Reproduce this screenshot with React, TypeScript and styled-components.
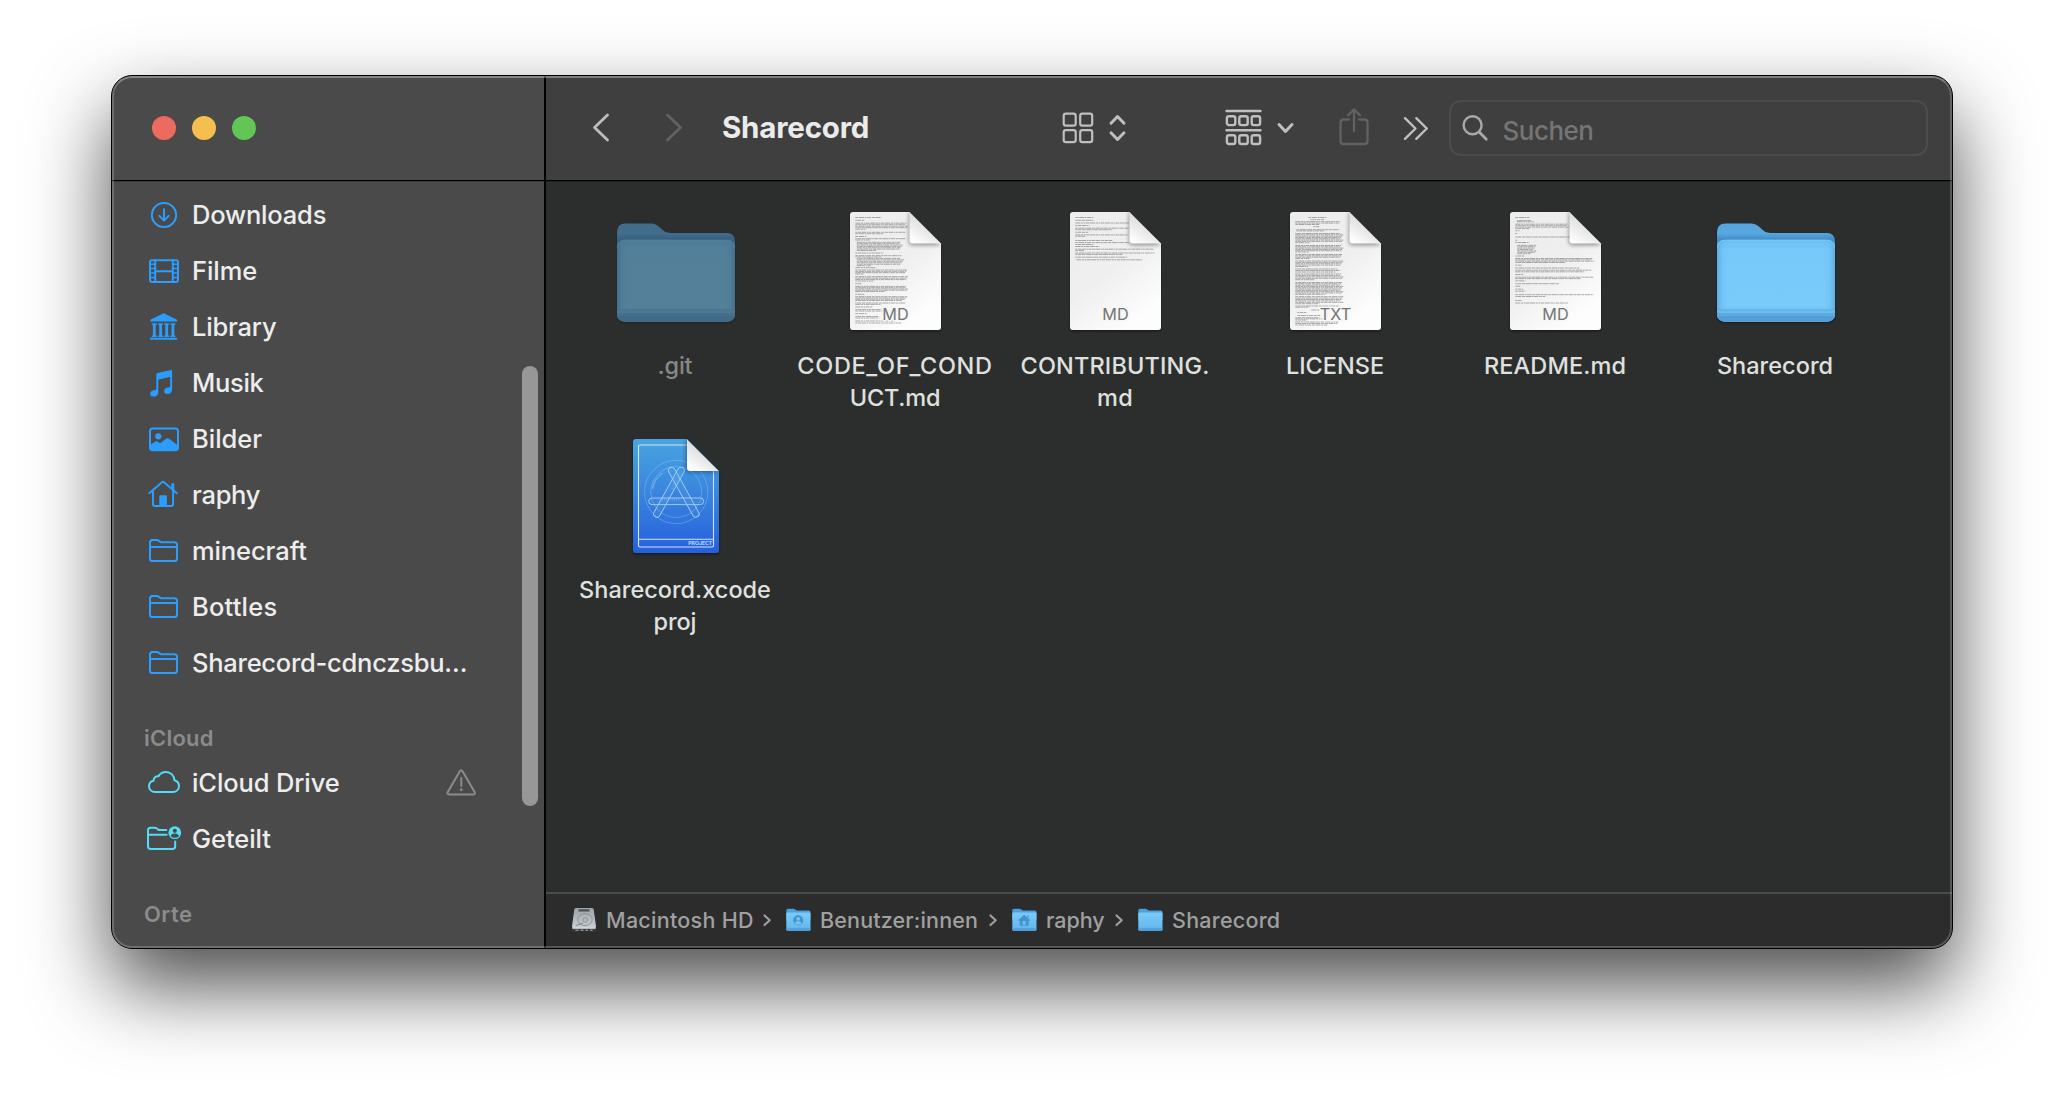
import React from 'react';
import styled, { createGlobalStyle } from 'styled-components';

const Global = createGlobalStyle`
  *, *::before, *::after { box-sizing: border-box; }
  body {
    margin: 0;
    background: #fff;
    font-family: Inter, "Liberation Sans", sans-serif;
    font-weight: 500;
    -webkit-font-smoothing: antialiased;
    overflow: hidden;
  }
`;

const BLUE = '#2a9dff';
const CYAN = '#52dcf7';

/* ---------- Window frame ---------- */

const Desktop = styled.div`
  width: 2064px;
  height: 1096px;
  padding: 75px 111px;
  overflow: hidden;
`;

const Frame = styled.div`
  position: relative;
  display: grid;
  grid-template-columns: 432px 1fr;
  width: 1842px;
  height: 874px;
  border: 1px solid #000;
  border-radius: 21px;
  overflow: hidden;
  background: #2c2e2d;
`;

const WindowShadow = styled.div`
  width: 1842px;
  height: 874px;
  border-radius: 21px;
  box-shadow: 0 37px 80px rgba(0, 0, 0, 0.7);
`;

const FrameHighlight = styled.div`
  position: absolute;
  inset: 0;
  border: 2px solid rgba(255, 255, 255, 0.2);
  border-top-color: rgba(255, 255, 255, 0.33);
  border-radius: 20px;
  pointer-events: none;
`;

/* ---------- Sidebar ---------- */

const Sidebar = styled.aside`
  position: relative;
  display: flex;
  flex-direction: column;
  min-height: 0;
  background: #4a4a4a;
`;

const TrafficLights = styled.div`
  display: flex;
  flex: none;
  gap: 16px;
  height: 105px;
  padding: 40px 0 0 40px;
  border-bottom: 1px solid #000;
`;

const Light = styled.span<{ $color: string }>`
  width: 24px;
  height: 24px;
  border-radius: 50%;
  background: ${(p) => p.$color};
`;

const SidebarBody = styled.nav`
  flex: 1;
  min-height: 0;
  padding-top: 6px;
  overflow: hidden;
  box-shadow: inset 0 1px 0 #3b3b3b;
`;

const SectionTitle = styled.h2<{ $track: number }>`
  height: 64px;
  margin: 0;
  padding: 30px 0 0 32px;
  font-size: 22px;
  line-height: 34px;
  font-weight: 600;
  letter-spacing: ${(p) => p.$track}px;
  color: #8b8b8b;
`;

const SidebarRow = styled.div`
  display: flex;
  align-items: center;
  height: 56px;
  padding: 0 67px 0 36px;
`;

const RowIcon = styled.svg`
  flex: none;
  width: 32px;
  height: 32px;
  overflow: visible;
`;

const RowLabel = styled.span<{ $track: number }>`
  flex: 1;
  padding-left: 12px;
  font-size: 25.5px;
  line-height: 32px;
  letter-spacing: ${(p) => p.$track}px;
  white-space: nowrap;
  color: #ededed;
`;

const ScrollThumb = styled.div`
  position: absolute;
  top: 290px;
  right: 6px;
  width: 16px;
  height: 440px;
  border-radius: 8px;
  background: #979797;
`;

/* ---------- Main column ---------- */

const Main = styled.main`
  display: flex;
  flex-direction: column;
  min-width: 0;
  border-left: 2px solid #000;
`;

const Toolbar = styled.header`
  display: flex;
  flex: none;
  align-items: center;
  height: 105px;
  padding: 0 24px 0 45px;
  border-bottom: 1px solid #000;
  background: #3f3f3f;
`;

const ToolIcon = styled.svg<{ $gap?: number; $lift?: number }>`
  flex: none;
  margin-left: ${(p) => p.$gap ?? 0}px;
  margin-bottom: ${(p) => (p.$lift ?? 0) * 2}px;
  overflow: visible;
`;

const Title = styled.h1`
  width: 340px;
  margin: 0 0 2px 37px;
  font-size: 29.5px;
  font-weight: 700;
  line-height: 40px;
  letter-spacing: -0.2px;
  color: #ebebeb;
`;

const SearchField = styled.div`
  display: flex;
  align-items: center;
  width: 480px;
  height: 56px;
  margin-left: 20px;
  padding-left: 10px;
  border: 2px solid #4c4c4c;
  border-radius: 12px;
`;

const SearchText = styled.span`
  padding: 5px 0 0 14px;
  font-size: 26px;
  line-height: 32px;
  letter-spacing: -0.53px;
  color: #757575;
`;

const Files = styled.section`
  display: grid;
  flex: 1;
  grid-template-columns: repeat(6, 220px);
  grid-auto-rows: 206px;
  row-gap: 18px;
  padding: 27px 0 0 20px;
  box-shadow: inset 0 1px 0 #1f2020;
`;

const FileCell = styled.figure`
  display: flex;
  flex-direction: column;
  align-items: center;
  margin: 0;
`;

const IconBox = styled.div<{ $dim?: boolean; $page?: boolean }>`
  display: flex;
  align-items: center;
  justify-content: center;
  width: 128px;
  height: 128px;
  padding: ${(p) => (p.$page ? '0 1px 2px 0' : '0')};
  opacity: ${(p) => (p.$dim ? 0.53 : 1)};
`;

const FileName = styled.figcaption<{ $dim?: boolean }>`
  display: flex;
  flex-direction: column;
  align-items: center;
  margin-top: 14px;
  padding-right: 2px;
  font-size: 23.5px;
  line-height: 32px;
  white-space: nowrap;
  color: ${(p) => (p.$dim ? '#868887' : '#dfe0df')};
`;

const NameLine = styled.span<{ $track: number }>`
  letter-spacing: ${(p) => p.$track}px;
`;

const Drawing = styled.svg`
  flex: none;
  overflow: visible;
  font-family: Inter, "Liberation Sans", sans-serif;
`;

const PathBar = styled.footer`
  display: flex;
  flex: none;
  align-items: center;
  height: 56px;
  padding: 0 0 2px 25px;
  border-top: 2px solid #4b4b4b;
  background: #2c2c2c;
`;

const Crumb = styled.span<{ $width: number; $track: number }>`
  width: ${(p) => p.$width}px;
  padding-left: 9px;
  font-size: 21.5px;
  line-height: 28px;
  letter-spacing: ${(p) => p.$track}px;
  white-space: nowrap;
  color: #a0a0a0;
`;

/* ---------- Sidebar icons ---------- */

const line = { fill: 'none', strokeWidth: 2, strokeLinecap: 'round', strokeLinejoin: 'round' } as const;

const DownloadIcon = () => (
  <RowIcon viewBox="0 0 32 32" stroke={BLUE} {...line}>
    <circle cx="16" cy="16" r="12.1" />
    <path d="M16 10.3V21.4M11.3 16.9 16 21.6l4.7-4.7" />
  </RowIcon>
);

const FilmIcon = () => (
  <RowIcon viewBox="0 0 32 32" stroke={BLUE} {...line}>
    <rect x="2" y="5.2" width="28" height="21.8" rx="2" />
    <path d="M7.2 5.5v21M24.8 5.5v21M7.2 16.2h17.6" />
    <path d="M2.5 9.3h4M2.5 13.6h4M2.5 18h4M2.5 22.4h4M25.5 9.3h4M25.5 13.6h4M25.5 18h4M25.5 22.4h4" strokeWidth="1.5" />
  </RowIcon>
);

const LibraryIcon = () => (
  <RowIcon viewBox="0 0 32 32" fill={BLUE}>
    <path d="M15.1 2.5q.6-.3 1.2 0L28.6 8.6q.8.5.5 1.4-.2.6-1 .6H3.3q-.8 0-1-.6-.3-.9.5-1.4z" />
    {[6.3, 12.6, 18.7, 24.9].map((x) => (
      <path key={x} d={`M${x - 2.5} 12.3h5v1.5h-1.1v10.6h1.1v1.5h-5v-1.5h1.1V13.8h-1.1z`} />
    ))}
    <rect x="2" y="26.8" width="27.2" height="2" rx=".8" />
  </RowIcon>
);

const MusicIcon = () => (
  <RowIcon viewBox="0 0 32 32" fill={BLUE}>
    <path d="M8.3 7.4q0-1.2 1.2-1.5L23 3q1.1-.2 1.1.9V22.5q0 4.2-4.4 4.500-3.6.1-3.6-2.9 0-2.7 3.5-3.5l1.8-.4q.8-.2.8-1V10.6q0-.6-.6-.5l-10.7 2.3q-.6.1-.6.7V25q0 4.300-4.500 4.600-3.600.1-3.600-2.900 0-2.600 3.400-3.400l1.800-.4q.9-.2.900-1.100z" />
  </RowIcon>
);

const PictureIcon = () => (
  <RowIcon viewBox="0 0 32 32" stroke={BLUE} {...line}>
    <rect x="2" y="5.6" width="28" height="21.7" rx="2.6" />
    <circle cx="10.3" cy="13.3" r="3.1" fill={BLUE} stroke="none" />
    <path d="M2 22l5.600-3.400q1-.6 2 0L12 20.300l6.500-4.700q1.300-.9 2.600.1L30 22.400V25q0 2.300-2.500 2.300h-23Q2 27.300 2 25z" fill={BLUE} stroke="none" />
  </RowIcon>
);

const HomeIcon = () => (
  <RowIcon viewBox="0 0 32 32" stroke={BLUE} {...line}>
    <path d="M1.3 14.2 14 3.2q1-.8 2 0l12.8 11" />
    <path d="M5 12.5V25q0 1.900 1.900 1.900h16.300q1.900 0 1.900-1.900V12.500" />
    <path d="M11.3 27V17.2q0-.9.9-.9h5.8q.9 0 .9.9V27z" fill={BLUE} stroke="none" />
    <path d="M23.2 8.2V5q0-.8.8-.8h1.5q.8 0 .8.8v6z" fill={BLUE} stroke="none" />
  </RowIcon>
);

const FolderLineIcon = () => (
  <RowIcon viewBox="0 0 32 32" stroke={BLUE} {...line}>
    <path d="M2 7.6Q2 5 4.6 5H8.6q1.300 0 2.200.7L12 6.600q.9.700 2.100.7H26.200q2.800 0 2.800 2.800V23.400q0 2.700-2.700 2.700H4.700Q2 26.100 2 23.400z" />
    <path d="M2 11.9h27" />
  </RowIcon>
);

const CloudIcon = () => (
  <RowIcon viewBox="0 0 32 32" stroke={CYAN} {...line}>
    <path d="M7.3 25.1C3.5 25.1 1 22.5 1 19.3c0-2.8 1.8-5 4.5-5.6.1-3 2.4-4.900 5-4.400C11.800 6.800 14.600 5 18 5c4.800 0 8.200 3.500 8.400 8.200 2.900.9 4.600 3.100 4.600 5.800 0 3.500-2.700 6.100-6.300 6.100z" />
  </RowIcon>
);

const SharedFolderIcon = () => (
  <RowIcon viewBox="0 0 32 32" stroke={CYAN} {...line}>
    <path d="M18.3 7.1H12q-1.200 0-2.100-.7L8.800 5.500Q7.900 4.800 6.700 4.800H2.600Q0 4.800 0 7.400V23.200q0 2.800 2.800 2.800H24.400q2.800 0 2.800-2.800V18.600" />
    <path d="M0 11.700h18.600" />
    <circle cx="26.8" cy="9.7" r="6.4" fill={CYAN} stroke="none" />
    <circle cx="26.8" cy="7.8" r="2.1" fill="#4a4a4a" stroke="none" />
    <path d="M22.7 13.3q.6-2.700 4.100-2.700t4.100 2.700q-1.600 1.500-4.100 1.500t-4.100-1.500z" fill="#4a4a4a" stroke="none" />
  </RowIcon>
);

const WarningIcon = () => (
  <RowIcon viewBox="0 0 32 32" stroke="#8b8b8b" {...line}>
    <path d="M14.7 4.5q1.500-2.300 3 0L29.600 25.100q1.100 2.300-1.400 2.400H4.200q-2.500-.1-1.400-2.400z" />
    <path d="M16.3 11v8" />
    <circle cx="16.3" cy="22.7" r="1.4" fill="#8b8b8b" stroke="none" />
  </RowIcon>
);

/* ---------- File icons ---------- */

const FolderArt = () => (
  <Drawing width="118" height="99" viewBox="0 0 118 99">
    <defs>
      <linearGradient id="folderBack" x1="0" y1="0" x2="0" y2="1">
        <stop offset="0" stopColor="#56a5de" />
        <stop offset=".1" stopColor="#58a7df" />
        <stop offset=".17" stopColor="#4189c7" />
      </linearGradient>
      <linearGradient id="folderFront" x1="0" y1="0" x2="0" y2="1">
        <stop offset="0" stopColor="#6dc0f3" />
        <stop offset=".12" stopColor="#77c9fa" />
        <stop offset=".82" stopColor="#79cbfa" />
        <stop offset=".85" stopColor="#70c2f2" />
      </linearGradient>
      <linearGradient id="folderEdge">
        <stop offset="0" stopColor="#4f9fd9" stopOpacity=".7" />
        <stop offset=".05" stopColor="#5fb2e8" stopOpacity=".2" />
        <stop offset=".1" stopColor="#5fb2e8" stopOpacity="0" />
        <stop offset=".9" stopColor="#5fb2e8" stopOpacity="0" />
        <stop offset=".95" stopColor="#5fb2e8" stopOpacity=".2" />
        <stop offset="1" stopColor="#4f9fd9" stopOpacity=".7" />
      </linearGradient>
      <filter id="folderDrop" x="-.1" y="-.1" width="1.2" height="1.2">
        <feDropShadow dx="0" dy="1.5" stdDeviation="1.2" floodOpacity=".4" />
      </filter>
    </defs>
    <g filter="url(#folderDrop)">
      <path d="M0 9Q0 .5 8.5.5H33.5C38 .5 40.5 2 43.5 5c3.2 3.200 5.500 4.900 10 4.900H109.500Q118 9.900 118 18.500V90Q118 98.500 109.500 98.500H8.500Q0 98.500 0 90z" fill="url(#folderBack)" />
    </g>
    <path d="M0 24.500Q0 17 8 17H110Q118 17 118 24.500V90Q118 98.500 109.500 98.500H8.500Q0 98.500 0 90z" fill="url(#folderFront)" />
    <path d="M0 24.500Q0 17 8 17H110Q118 17 118 24.500V90Q118 98.500 109.500 98.500H8.500Q0 98.500 0 90z" fill="url(#folderEdge)" />
    <path d="M.5 24.500Q.5 17 8.500 17H109.500q8 0 8 7.500" fill="none" stroke="#8fd5fb" strokeWidth=".8" opacity=".7" />
    <path d="M0 86.500h118v1.300H0z" fill="#5eafe3" />
    <path d="M0 87.800h118v1.800H0z" fill="#6bbcee" />
    <path d="M0 90h118Q118 98.500 109.500 98.500H8.500Q0 98.500 0 90z" fill="#5baae0" />
    <path d="M.3 93h117.400q-1.500 5.500-8.200 5.500H8.500Q1.800 98.500.3 93z" fill="#529fd7" />
  </Drawing>
);

/* Each block of page text: top, bottom, width, width of the last row, indent. */
type Block = [number, number, number, number?, number?];

const CODE_TEXT: Block[] = [
  [5.5, 5.5, 26], [8.3, 8.3, 9], [11.2, 17.2, 53, 11], [20.3, 21.7, 51, 28], [24.5, 24.5, 11], [26.7, 28, 53, 15],
  [30.3, 38.5, 46, 20, 1.5], [41, 41, 28], [43.7, 45, 46, 26], [46.4, 53.7, 47, 14, 1.5], [55.7, 55.7, 21], [58, 62, 53, 8],
  [64.7, 69, 53, 18], [71.7, 71.7, 6], [74.4, 79.5, 53, 30], [82.3, 82.3, 9], [84.7, 88.5, 52, 47],
  [91, 92.4, 53, 26], [95, 95, 17], [97.6, 99, 27, 27], [101.7, 101.7, 12], [104.5, 106, 27, 24], [109, 111, 42, 46],
];
const CONTRIB_TEXT: Block[] = [
  [5.5, 5.5, 18], [8.3, 8.3, 18], [11, 11, 54], [13.5, 13.5, 14], [16.2, 17.7, 54, 37], [20.3, 20.3, 13],
  [22.9, 24.3, 54, 10], [28.5, 28.5, 37], [30.6, 30.6, 54], [32.5, 32.5, 18], [34.5, 34.5, 24],
  [37.2, 38.6, 79, 9], [41, 42.4, 79, 47], [45.2, 45.2, 52], [47.8, 47.8, 66, 66, 1],
];
const LICENSE_TEXT: Block[] = [
  [5.5, 5.5, 18, 18, 13], [7.7, 7.7, 14, 14, 15], [9.7, 12.5, 47, 24], [14.7, 14.7, 6, 6, 18], [17.7, 18.9, 43, 28, 1],
  [21.5, 30.7, 48, 14], [33.5, 40, 48, 14], [42.5, 46.5, 48, 15], [49, 54.5, 48, 13], [57, 60, 45, 41], [62, 67.7, 48, 19],
  [70.5, 82.3, 48, 30], [84.7, 91.7, 48, 24], [94, 95.2, 47, 13], [98, 98, 8, 8, 16], [100.5, 100.5, 9, 9, 2],
  [103.5, 103.5, 23, 23, 2], [105.7, 108, 27, 12], [110, 113, 45, 32],
];
const README_TEXT: Block[] = [
  [5.5, 5.5, 14], [8.6, 9.8, 17, 17, 1.5], [12.2, 16.6, 54, 14, 0], [18.7, 18.7, 4], [21.5, 21.5, 2], [25, 25, 54],
  [28.3, 28.3, 2], [30.5, 30.5, 14], [33.3, 41.7, 19, 13, 2], [44, 44, 9], [46.5, 50.5, 79, 50], [53.2, 53.2, 7],
  [56, 56, 64], [58.2, 59.8, 79, 69], [62.6, 62.6, 8], [65.2, 66.6, 79, 66], [68.8, 68.8, 10], [71.7, 71.7, 44],
  [74.2, 74.2, 5], [77.2, 79.2, 9, 10], [82.7, 84.5, 78, 30], [88.5, 88.5, 7], [91, 91, 53],
];

const DASHES = ['3 .7 5 .6 2 .5 4 .7', '1.5 .5 4 .7 3 .6 6 .5', '5 .6 2.5 .6 1.5 .5 3.5 .6', '2 .6 3.5 .5 4.5 .7 1.2 .5'];

const PageText = ({ blocks }: { blocks: Block[] }) => (
  <g stroke="#5a5a5a" strokeWidth=".8" opacity=".62">
    {blocks.map(([top, bottom, width, last = width, indent = 0], b) => {
      const rows = Math.round((bottom - top) / 1.38) + 1;
      return Array.from({ length: rows }, (_, r) => {
        const w = r === rows - 1 ? last : width - ((b * 3 + r * 5) % 4);
        const y = rows === 1 ? top : top + (r * (bottom - top)) / (rows - 1);
        return <path key={`${b}-${r}`} d={`M${5.3 + indent} ${y}h${w}`} strokeDasharray={DASHES[(b + r) % 4]} />;
      });
    })}
  </g>
);

const DocumentArt = ({ id, kind, blocks }: { id: string; kind: string; blocks: Block[] }) => (
  <Drawing width="91" height="118" viewBox="0 0 91 118">
    <defs>
      <linearGradient id={`${id}-page`} x1="0" y1="0" x2=".6" y2="1">
        <stop offset="0" stopColor="#ededed" />
        <stop offset=".55" stopColor="#efefef" />
        <stop offset="1" stopColor="#fdfdfd" />
      </linearGradient>
      <linearGradient id={`${id}-fold`} x1=".2" y1="1" x2=".6" y2=".4">
        <stop offset="0" stopColor="#ffffff" />
        <stop offset="1" stopColor="#dedede" />
      </linearGradient>
      <filter id={`${id}-soft`} x="-.4" y="-.4" width="1.8" height="1.8">
        <feGaussianBlur stdDeviation="2.2" />
      </filter>
      <filter id={`${id}-drop`} x="-.1" y="-.1" width="1.2" height="1.2">
        <feDropShadow dx="0" dy="1.5" stdDeviation="1.3" floodOpacity=".45" />
      </filter>
      <clipPath id={`${id}-clip`}>
        <path d="M3 0H59.5L91 31.5V115q0 3-3 3H3q-3 0-3-3V3Q0 0 3 0z" />
      </clipPath>
    </defs>
    <path d="M3 0H59.5L91 31.5V115q0 3-3 3H3q-3 0-3-3V3Q0 0 3 0z" fill={`url(#${id}-page)`} filter={`url(#${id}-drop)`} />
    <g clipPath={`url(#${id}-clip)`}>
      <PageText blocks={blocks} />
      <path d="M59 0V30q0 3 3 3H91L60 0z" fill="#000" opacity=".42" filter={`url(#${id}-soft)`} />
    </g>
    <path d="M59.5 .5V28.5q0 3 3 3H90.7z" fill={`url(#${id}-fold)`} />
    <text x="45.5" y="108" fontSize="16.2" fontWeight="400" textAnchor="middle" fill="#747474" stroke="#f6f6f6" strokeWidth="2.5" paintOrder="stroke">{kind}</text>
  </Drawing>
);

const ProjectArt = () => (
  <Drawing width="86" height="114" viewBox="0 0 86 114">
    <defs>
      <linearGradient id="proj" x1="0" y1="0" x2="0" y2="1">
        <stop offset="0" stopColor="#48a5e0" />
        <stop offset=".45" stopColor="#3a86de" />
        <stop offset="1" stopColor="#2660dc" />
      </linearGradient>
      <linearGradient id="projFold" x1=".2" y1="1" x2=".6" y2=".4">
        <stop offset="0" stopColor="#fff" />
        <stop offset="1" stopColor="#dcdcdc" />
      </linearGradient>
      <filter id="projSoft" x="-.4" y="-.4" width="1.8" height="1.8">
        <feGaussianBlur stdDeviation="2" />
      </filter>
      <filter id="projDrop" x="-.1" y="-.1" width="1.2" height="1.2">
        <feDropShadow dx="0" dy="1.5" stdDeviation="1.2" floodOpacity=".45" />
      </filter>
      <clipPath id="projClip">
        <path d="M3 0H54L86 32V111q0 3-3 3H3q-3 0-3-3V3Q0 0 3 0z" />
      </clipPath>
    </defs>
    <path d="M3 0H54L86 32V111q0 3-3 3H3q-3 0-3-3V3Q0 0 3 0z" fill="url(#proj)" filter="url(#projDrop)" />
    <g fill="none" stroke="#cfe4fa" strokeWidth="1.1">
      <path d="M54.5 6H7Q5.5 6 5.5 7.5V106.500Q5.500 108 7 108H79Q80.500 108 80.500 106.500V31.500" />
      <path d="M5.5 100.3h75" />
    </g>
    <g fill="none" stroke="#9fd0f5" strokeWidth=".8" opacity=".45">
      <circle cx="43.2" cy="53" r="31.7" />
      <circle cx="43.2" cy="53" r="25.5" />
      <path d="M19.5 50a24 24 0 0 1 10-16" strokeWidth="1.5" />
    </g>
    <g fill="#7cc0f2" fillOpacity=".12" stroke="#b9dcf8" strokeWidth=".9" opacity=".85">
      <rect x="-3.3" y="-3.3" width="56.3" height="6.6" rx="3.3" transform="translate(38.7 31.5) rotate(61)" />
      <rect x="-3.3" y="-3.3" width="56.3" height="6.6" rx="3.3" transform="translate(48 31.5) rotate(119)" />
      <rect x="15.7" y="59" width="55" height="6.6" rx="3.3" />
    </g>
    <path d="M27 60.5h20" stroke="#b9dcf8" strokeWidth="2.2" strokeDasharray=".7 1.3" opacity=".35" />
    <path d="M47 35l-9 16" stroke="#b9dcf8" strokeWidth="3" strokeDasharray=".7 1.6" opacity=".3" />
    <g clipPath="url(#projClip)">
      <path d="M53 0V30q0 3 3 3H86L54 0z" fill="#01204f" opacity=".5" filter="url(#projSoft)" />
    </g>
    <path d="M54 .5V29q0 3 3 3H85.7z" fill="url(#projFold)" />
    <text x="79.3" y="106" fontSize="5.2" fontWeight="600" textAnchor="end" fill="#cfe2fb">PROJECT</text>
  </Drawing>
);

/* ---------- Path bar icons ---------- */

const DiskArt = () => (
  <ToolIcon width="26" height="26" viewBox="0 0 26 26">
    <defs>
      <linearGradient id="disk" x1="0" y1="0" x2="0" y2="1">
        <stop offset="0" stopColor="#9ea3a7" />
        <stop offset="1" stopColor="#c9ced2" />
      </linearGradient>
    </defs>
    <path d="M5 1H21q1.5 0 1.7 1.5L25 19.5V23q0 1.5-1.5 1.5h-21Q1 24.5 1 23v-3.500L3.300 2.500Q3.500 1 5 1z" fill="#383b3d" />
    <path d="M5 1H21q1.5 0 1.7 1.5L25 19.5q0 1.500-1.500 1.500h-21Q1 21 1 19.500L3.300 2.500Q3.500 1 5 1z" fill="url(#disk)" />
    <path d="M7.5 2.3h11v2.2h-11z" fill="#4b4f52" />
    <path d="M1.5 21.2h23" stroke="#dfe3e6" strokeWidth="1.1" />
    <path d="M4.5 23.3h3M9.5 23.3h3M14.5 23.3h2.5M19 23.3h2.5" stroke="#85898c" strokeWidth="1.5" />
    <ellipse cx="14" cy="12.6" rx="7.2" ry="6" fill="none" stroke="#878d91" strokeWidth=".9" />
    <circle cx="14.3" cy="13" r="2.3" fill="#b4babe" stroke="#878d91" strokeWidth=".8" />
    <path d="M5 18.5l7-2.5" stroke="#858b8f" strokeWidth="1.2" />
  </ToolIcon>
);

const SmallFolder = ({ gap, badge }: { gap: number; badge?: 'user' | 'home' }) => (
  <ToolIcon $gap={gap} width="25" height="24" viewBox="0 0 25 24">
    <defs>
      <linearGradient id="smallFolder" x1="0" y1="0" x2="0" y2="1">
        <stop offset="0" stopColor="#79cbf9" />
        <stop offset=".75" stopColor="#68bbf0" />
        <stop offset="1" stopColor="#57a9e2" />
      </linearGradient>
    </defs>
    <path d="M.3 2.5Q.3.8 2 .8H7.5q1 0 1.7.8t1.8.8H22.8q1.7 0 1.7 1.700V12H.3z" fill="#4d9fdc" />
    <path d="M.3 5.8Q.3 4.5 1.6 4.5H23.2q1.3 0 1.3 1.3V21.3q0 1.700-1.700 1.700H2Q.3 23 .3 21.300z" fill="url(#smallFolder)" />
    <path d="M.3 20.3h24.2v1q0 1.700-1.700 1.700H2Q.3 23 .3 21.300z" fill="#4f9fd9" />
    {badge === 'user' && (
      <g>
        <circle cx="12.2" cy="12.3" r="5" fill="#4492cf" />
        <circle cx="12.2" cy="10.8" r="1.9" fill="#74c6f6" />
        <path d="M8.8 15.200q.7-2 3.400-2t3.400 2q-1.300 1.400-3.400 1.400t-3.400-1.400z" fill="#74c6f6" />
      </g>
    )}
    {badge === 'home' && (
      <path
        d="M12.2 6.800 18.300 12.200l-.8.900-.8-.6V17q0 .7-.7.700H8.400q-.7 0-.7-.7V12.500l-.8.600-.8-.9zM15.200 7.600h1.500v2.500l-1.500-1.300zM10.700 13.700v3h3v-3q0-.6-.6-.6h-1.800q-.6 0-.6.600z"
        fill="#4492cf"
        fillRule="evenodd"
      />
    )}
  </ToolIcon>
);

const Separator = () => (
  <ToolIcon width="9" height="12" viewBox="0 0 9 12" fill="none" stroke="#a0a0a0" strokeWidth="2.2" strokeLinecap="round" strokeLinejoin="round">
    <path d="M1.5 1.500 6.700 6.200 1.500 11" />
  </ToolIcon>
);

/* ---------- Data ---------- */

const FAVOURITES: { label: string; track: number; Icon: React.FC }[] = [
  { label: 'Downloads', track: -0.19, Icon: DownloadIcon },
  { label: 'Filme', track: -0.06, Icon: FilmIcon },
  { label: 'Library', track: -0.2, Icon: LibraryIcon },
  { label: 'Musik', track: -0.3, Icon: MusicIcon },
  { label: 'Bilder', track: -0.01, Icon: PictureIcon },
  { label: 'raphy', track: -0.3, Icon: HomeIcon },
  { label: 'minecraft', track: -0.1, Icon: FolderLineIcon },
  { label: 'Bottles', track: 0.2, Icon: FolderLineIcon },
  { label: 'Sharecord-cdnczsbu…', track: -0.26, Icon: FolderLineIcon },
];

const FILES: { name: [string, number][]; art: React.ReactNode; dim?: boolean; page?: boolean }[] = [
  { name: [['.git', -0.2]], art: <FolderArt />, dim: true },
  { name: [['CODE_OF_COND', 0.67], ['UCT.md', -0.2]], art: <DocumentArt id="code" kind="MD" blocks={CODE_TEXT} />, page: true },
  { name: [['CONTRIBUTING.', 0.15], ['md', 0.4]], art: <DocumentArt id="contrib" kind="MD" blocks={CONTRIB_TEXT} />, page: true },
  { name: [['LICENSE', 0]], art: <DocumentArt id="license" kind="TXT" blocks={LICENSE_TEXT} />, page: true },
  { name: [['README.md', 0.1]], art: <DocumentArt id="readme" kind="MD" blocks={README_TEXT} />, page: true },
  { name: [['Sharecord', 0.02]], art: <FolderArt /> },
  { name: [['Sharecord.xcode', 0], ['proj', -0.1]], art: <ProjectArt /> },
];

export default function App() {
  return (
    <Desktop>
      <Global />
      <WindowShadow>
        <Frame>
          <Sidebar>
            <TrafficLights>
              <Light $color="#ed6a5e" />
              <Light $color="#f5bf4f" />
              <Light $color="#62c655" />
            </TrafficLights>
            <SidebarBody>
              {FAVOURITES.map(({ label, track, Icon }) => (
                <SidebarRow key={label}>
                  <Icon />
                  <RowLabel $track={track}>{label}</RowLabel>
                </SidebarRow>
              ))}
              <SectionTitle $track={0.22}>iCloud</SectionTitle>
              <SidebarRow>
                <CloudIcon />
                <RowLabel $track={-0.12}>iCloud Drive</RowLabel>
                <WarningIcon />
              </SidebarRow>
              <SidebarRow>
                <SharedFolderIcon />
                <RowLabel $track={-0.06}>Geteilt</RowLabel>
              </SidebarRow>
              <SectionTitle $track={0.45}>Orte</SectionTitle>
            </SidebarBody>
            <ScrollThumb />
          </Sidebar>

          <Main>
            <Toolbar>
              <ToolIcon $lift={0.5} width="20" height="30" viewBox="0 0 20 30" {...line} stroke="#bdbdbd" strokeWidth="2.8">
                <path d="M16.500 2 3.500 14.500 16.500 27" />
              </ToolIcon>
              <ToolIcon $gap={54} $lift={0.5} width="20" height="30" viewBox="0 0 20 30" {...line} stroke="#626262" strokeWidth="2.8">
                <path d="M2.500 2 15.500 14.500 2.500 27" />
              </ToolIcon>
              <Title>Sharecord</Title>
              <ToolIcon $lift={0.5} width="32" height="32" viewBox="0 0 32 32" fill="none" stroke="#bfbfbf" strokeWidth="2.2">
                <rect x="1.700" y="1.700" width="12" height="12" rx="2.200" />
                <rect x="18.200" y="1.700" width="12" height="12" rx="2.200" />
                <rect x="1.700" y="18.200" width="12" height="12" rx="2.200" />
                <rect x="18.200" y="18.200" width="12" height="12" rx="2.200" />
              </ToolIcon>
              <ToolIcon $gap={15} width="17" height="28" viewBox="0 0 17 28" {...line} stroke="#bfbfbf" strokeWidth="3">
                <path d="M2 9.200 8.500 2.500 15 9.200M2 18.800 8.500 25.500 15 18.800" />
              </ToolIcon>
              <ToolIcon $gap={99} $lift={1.5} width="37" height="36" viewBox="0 0 37 36" fill="none" stroke="#bfbfbf" strokeWidth="2.4">
                <path d="M1.500 2H35.500M1.500 21.300H35.500" strokeLinecap="round" />
                {[1.9, 14.3, 26.7].map((x) => (
                  <React.Fragment key={x}>
                    <rect x={x} y="7.300" width="8.400" height="8.800" rx="2" />
                    <rect x={x} y="26.200" width="8.400" height="8.800" rx="2" />
                  </React.Fragment>
                ))}
              </ToolIcon>
              <ToolIcon $gap={15} width="17" height="12" viewBox="0 0 17 12" {...line} stroke="#bfbfbf" strokeWidth="3">
                <path d="M2 2.500 8.500 9.500 15 2.500" />
              </ToolIcon>
              <ToolIcon $gap={45} $lift={2.5} width="30" height="38" viewBox="0 0 30 38" {...line} stroke="#626262" strokeWidth="2.3">
                <path d="M10 12.500H4.500Q1.500 12.500 1.500 15.500V34q0 3 3 3H25.500q3 0 3-3V15.500q0-3-3-3H20" />
                <path d="M15 24V2.500M9 8.500l6-6.200L21 8.500" />
              </ToolIcon>
              <ToolIcon $gap={34} width="26" height="24" viewBox="0 0 26 24" {...line} stroke="#bfbfbf" strokeWidth="2.4">
                <path d="M2 2.200 12.500 12.500 2 22.800M13.300 2.200 23.800 12.500 13.300 22.800" />
              </ToolIcon>
              <SearchField>
                <ToolIcon width="28" height="28" viewBox="0 0 28 28" {...line} stroke="#a8a8a8" strokeWidth="2.4">
                  <circle cx="11.600" cy="11.300" r="9" />
                  <path d="M18.200 18 25.300 25.200" strokeWidth="2.8" />
                </ToolIcon>
                <SearchText>Suchen</SearchText>
              </SearchField>
            </Toolbar>

            <Files>
              {FILES.map(({ name, art, dim, page }) => (
                <FileCell key={name[0][0]}>
                  <IconBox $dim={dim} $page={page}>{art}</IconBox>
                  <FileName $dim={dim}>
                    {name.map(([text, track]) => (
                      <NameLine key={text} $track={track}>{text}</NameLine>
                    ))}
                  </FileName>
                </FileCell>
              ))}
            </Files>

            <PathBar>
              <DiskArt />
              <Crumb $width={166} $track={0.27}>Macintosh HD</Crumb>
              <Separator />
              <SmallFolder gap={14} badge="user" />
              <Crumb $width={178} $track={0.16}>Benutzer:innen</Crumb>
              <Separator />
              <SmallFolder gap={14} badge="home" />
              <Crumb $width={78} $track={-0.02}>raphy</Crumb>
              <Separator />
              <SmallFolder gap={14} />
              <Crumb $width={130} $track={0.25}>Sharecord</Crumb>
            </PathBar>
          </Main>
          <FrameHighlight />
        </Frame>
      </WindowShadow>
    </Desktop>
  );
}
